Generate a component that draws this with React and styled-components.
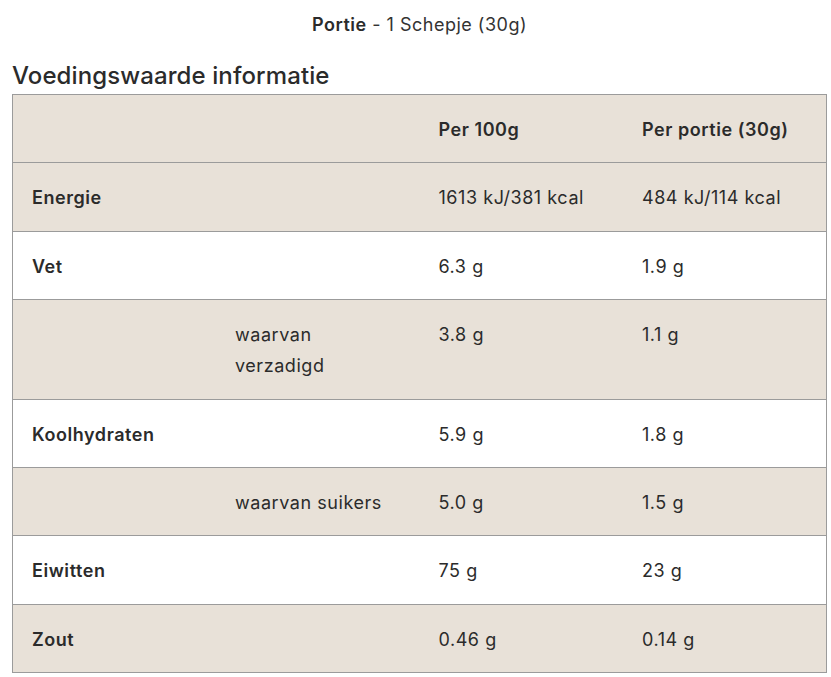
import React from "react";
import styled, { createGlobalStyle } from "styled-components";

const Global = createGlobalStyle`
  html, body { margin: 0; padding: 0; background: #fff; }
  body { font-family: Inter, "Noto Sans", sans-serif; color: #2b2b2b; }
`;

const Page = styled.div`
  padding: 0 4px 0 12px;
`;

const Serving = styled.p`
  margin: 0;
  padding-top: 13px;
  text-align: center;
  font-size: 18px;
  line-height: 24px;
  letter-spacing: 0.5px;
  color: #333;
  & b { font-weight: 600; color: #2b2b2b; }
`;

const Title = styled.h2`
  margin: 24px 0 3px;
  font-size: 24px;
  line-height: 30px;
  font-weight: 500;
  letter-spacing: 0.1px;
  color: #2b2b2b;
`;

const Table = styled.table`
  width: 815px;
  border-collapse: collapse;
  table-layout: fixed;
  border: 1px solid #9b9b9b;
  font-size: 18px;
  letter-spacing: 0.55px;
`;

const Row = styled.tr`
  background: ${(p) => (p.$shaded ? "#e8e1d8" : "#ffffff")};
  border-top: 1px solid #9b9b9b;
`;

const Cell = styled.td`
  padding: 19px 19px 17.4px;
  vertical-align: top;
  line-height: 31px;
  font-weight: ${(p) => (p.$bold ? 600 : 400)};
  color: #2b2b2b;
  text-align: left;
`;

const SubText = styled.span`
  display: inline-block;
  max-width: ${(p) => (p.$narrow ? "110px" : "none")};
`;

const rows = [
  { name: "Energie", sub: "", a: "1613 kJ/381 kcal", b: "484 kJ/114 kcal" },
  { name: "Vet", sub: "", a: "6.3 g", b: "1.9 g" },
  { name: "", sub: "waarvan verzadigd", a: "3.8 g", b: "1.1 g", narrow: true },
  { name: "Koolhydraten", sub: "", a: "5.9 g", b: "1.8 g" },
  { name: "", sub: "waarvan suikers", a: "5.0 g", b: "1.5 g" },
  { name: "Eiwitten", sub: "", a: "75 g", b: "23 g" },
  { name: "Zout", sub: "", a: "0.46 g", b: "0.14 g" },
];

export default function App() {
  return (
    <Page>
      <Global />
      <Serving>
        <b>Portie</b> - 1 Schepje (30g)
      </Serving>
      <Title>Voedingswaarde informatie</Title>
      <Table>
        <tbody>
          <Row $shaded>
            <Cell />
            <Cell />
            <Cell $bold>Per 100g</Cell>
            <Cell $bold>Per portie (30g)</Cell>
          </Row>
          {rows.map((r, i) => (
            <Row key={i} $shaded={i % 2 === 0}>
              <Cell $bold>{r.name}</Cell>
              <Cell>
                <SubText $narrow={r.narrow}>{r.sub}</SubText>
              </Cell>
              <Cell>{r.a}</Cell>
              <Cell>{r.b}</Cell>
            </Row>
          ))}
        </tbody>
      </Table>
    </Page>
  );
}
